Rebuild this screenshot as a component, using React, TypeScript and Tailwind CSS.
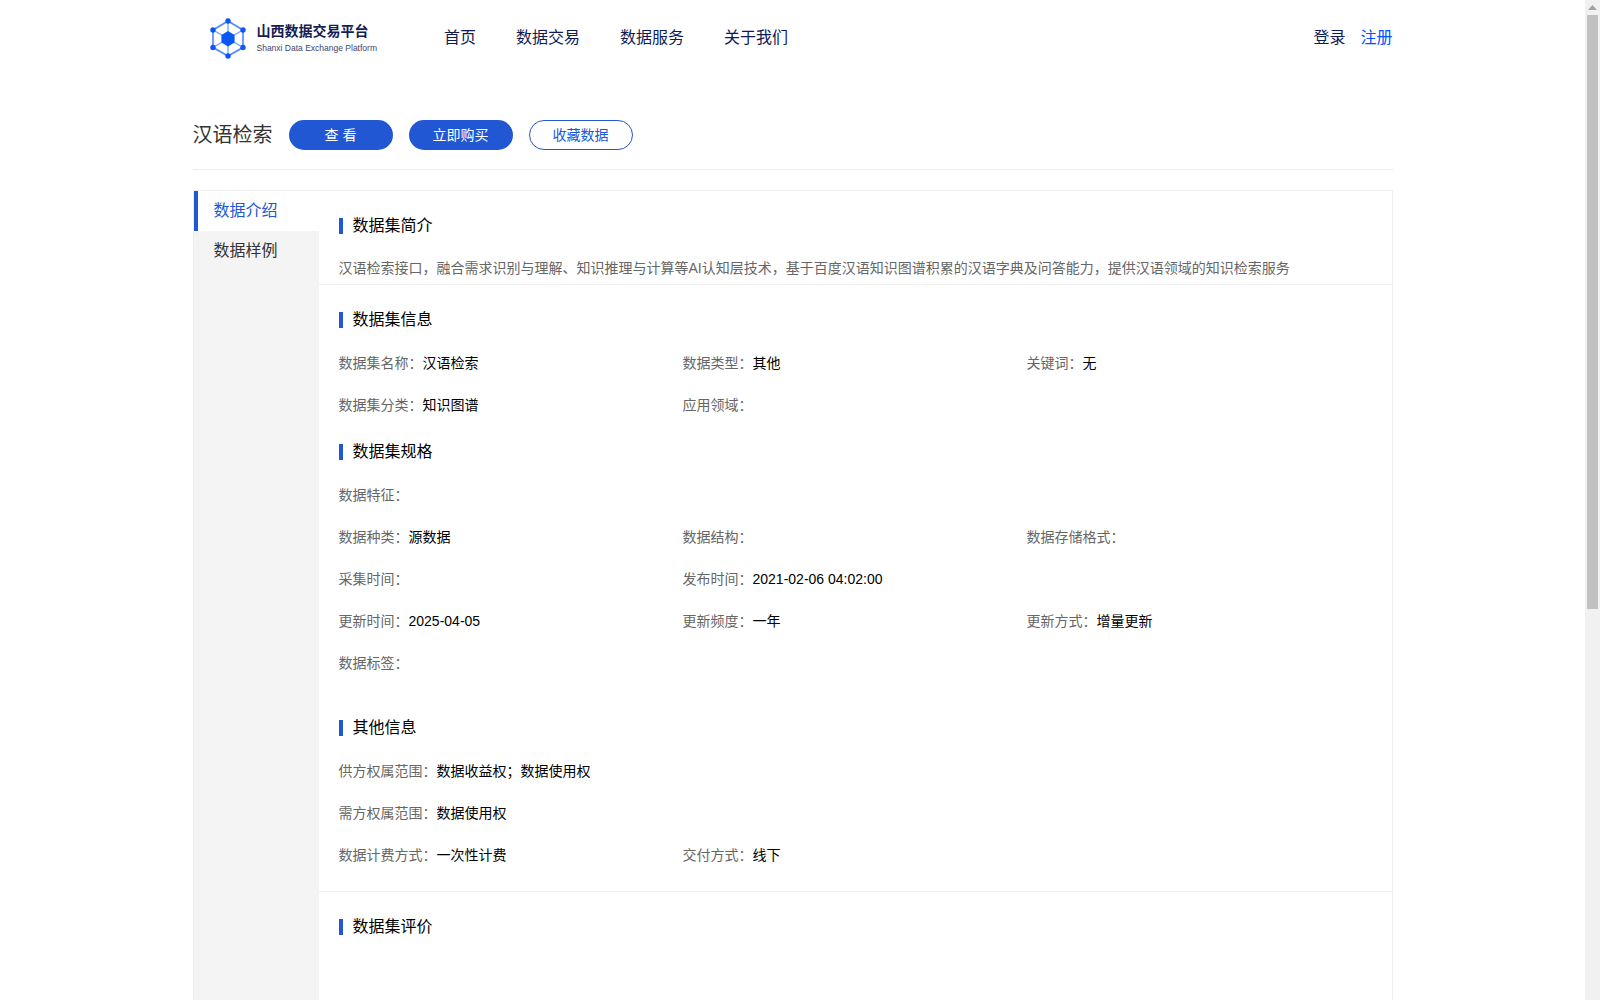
import React from "react";

type Cell = [string, string] | null;

function Heading({ children, className = "" }: { children: React.ReactNode; className?: string }) {
  return (
    <div className={"flex h-4 items-center " + className}>
      <span className="h-4 w-1 bg-[#2257d4]" />
      <h3 className="ml-2.5 text-base leading-4 text-black">{children}</h3>
    </div>
  );
}

function Rows({ cells, className = "" }: { cells: Cell[]; className?: string }) {
  return (
    <div className={"grid grid-cols-[344px_344px_1fr] auto-rows-[42px] " + className}>
      {cells.map((c, i) => (
        <div key={i} className="flex items-center text-sm text-[#666666]">
          {c && (
            <>
              <span>{c[0]}：</span>
              <span className="text-black">{c[1]}</span>
            </>
          )}
        </div>
      ))}
    </div>
  );
}

function Logo() {
  const outer: [number, number][] = [
    [18, 3],
    [33, 12],
    [33, 29.5],
    [18, 38],
    [3, 29.5],
    [3, 12],
  ];
  return (
    <div className="flex items-center">
      <svg width="36" height="41" viewBox="0 0 36 41" className="ml-[17px]">
        <polygon points={outer.map((p) => p.join(",")).join(" ")} fill="none" stroke="#4d86ff" strokeWidth="1.6" />
        {outer.map((p, i) => (
          <line key={i} x1="18" y1="20.7" x2={p[0]} y2={p[1]} stroke="#7aa5ff" strokeWidth="1.4" />
        ))}
        {outer.map((p, i) => (
          <circle key={i} cx={p[0]} cy={p[1]} r="2.7" fill="#0b57f5" />
        ))}
        <polygon points="18,13 24.6,16.9 24.6,24.5 18,28.4 11.4,24.5 11.4,16.9" fill="#0b57f5" />
      </svg>
      <div className="ml-[11px] flex flex-col">
        <span className="text-sm leading-[18px] font-bold whitespace-nowrap text-[#141d54]">山西数据交易平台</span>
        <span className="mt-[3px] text-[8.5px] leading-[11px] whitespace-nowrap text-[#3b4470]">
          Shanxi Data Exchange Platform
        </span>
      </div>
    </div>
  );
}

export default function App() {
  return (
    <div className="flex h-screen overflow-hidden bg-white font-['Liberation_Sans','Noto_Sans_CJK_SC',sans-serif]">
      <div className="min-w-0 flex-1">
        <div className="mx-auto w-[1200px]">
          <header className="flex h-[76px] items-center text-base text-[#101a56]">
            <Logo />
            <nav className="ml-[67px] flex gap-10">
              <a>首页</a>
              <a>数据交易</a>
              <a>数据服务</a>
              <a>关于我们</a>
            </nav>
            <div className="ml-auto flex gap-[15px]">
              <a>登录</a>
              <a className="text-[#0052ff]">注册</a>
            </div>
          </header>

          <div className="mt-11 flex items-center gap-4 border-b border-[#eeeeee] pb-[19px]">
            <h1 className="text-xl leading-[30px] text-[#333333]">汉语检索</h1>
            <button className="h-[30px] w-[104px] rounded-[15px] bg-[#2257d4] text-sm text-white">查 看</button>
            <button className="h-[30px] w-[104px] rounded-[15px] bg-[#2257d4] text-sm text-white">立即购买</button>
            <button className="h-[30px] w-[104px] rounded-[15px] border border-[#2257d4] bg-white text-sm text-[#2257d4]">
              收藏数据
            </button>
          </div>

          <div className="mt-5 flex border border-[#eeeeee]">
            <aside className="w-[125px] shrink-0 bg-[#f4f4f4] text-base">
              <div className="flex h-10 items-center border-l-4 border-[#2257d4] bg-white pl-[16px] text-[#2257d4]">
                数据介绍
              </div>
              <div className="flex h-10 items-center pl-5 text-[#333333]">数据样例</div>
            </aside>
            <main className="min-w-0 flex-1">
              <section className="border-b border-[#eeeeee] pt-[27px] pr-5 pb-1.5 pl-5">
                <Heading>数据集简介</Heading>
                <p className="mt-6 text-sm leading-5 whitespace-nowrap text-[#666666]">
                  汉语检索接口，融合需求识别与理解、知识推理与计算等AI认知层技术，基于百度汉语知识图谱积累的汉语字典及问答能力，提供汉语领域的知识检索服务
                </p>
              </section>
              <section className="border-b border-[#eeeeee] pt-[27px] pr-5 pb-[15px] pl-5">
                <Heading>数据集信息</Heading>
                <Rows
                  className="mt-3.5"
                  cells={[
                    ["数据集名称", "汉语检索"],
                    ["数据类型", "其他"],
                    ["关键词", "无"],
                    ["数据集分类", "知识图谱"],
                    ["应用领域", ""],
                    null,
                  ]}
                />
                <Heading className="mt-[18px]">数据集规格</Heading>
                <Rows
                  className="mt-3.5"
                  cells={[
                    ["数据特征", ""],
                    null,
                    null,
                    ["数据种类", "源数据"],
                    ["数据结构", ""],
                    ["数据存储格式", ""],
                    ["采集时间", ""],
                    ["发布时间", "2021-02-06 04:02:00"],
                    null,
                    ["更新时间", "2025-04-05"],
                    ["更新频度", "一年"],
                    ["更新方式", "增量更新"],
                    ["数据标签", ""],
                    null,
                    null,
                  ]}
                />
                <Heading className="mt-9">其他信息</Heading>
                <Rows
                  className="mt-3.5"
                  cells={[
                    ["供方权属范围", "数据收益权；数据使用权"],
                    null,
                    null,
                    ["需方权属范围", "数据使用权"],
                    null,
                    null,
                    ["数据计费方式", "一次性计费"],
                    ["交付方式", "线下"],
                    null,
                  ]}
                />
              </section>
              <section className="pt-[27px] pl-5">
                <Heading>数据集评价</Heading>
                <svg width="220" height="40" viewBox="0 0 220 40" className="mt-[46px] ml-[451px]">
                  <defs>
                    <linearGradient id="g1" x1="0" y1="1" x2="1" y2="0">
                      <stop offset="0" stopColor="#eef1fe" />
                      <stop offset="1" stopColor="#c9d5f8" />
                    </linearGradient>
                  </defs>
                  <polygon points="20,40 77,24 83,28 107,22 113,23 118,28 121,40" fill="url(#g1)" />
                  <polygon points="85,40 85,32 112,26 118,30 121,40" fill="#e6ebff" />
                  <polygon points="91,40 91,35 112,31 112,40" fill="#ffffff" />
                  <circle cx="186" cy="46" r="14" fill="#eef2ff" />
                  <circle cx="204" cy="48" r="14" fill="#eef2ff" />
                </svg>
              </section>
            </main>
          </div>
        </div>
      </div>

      <div className="flex h-full w-[15px] shrink-0 flex-col bg-[#f1f1f1]">
        <div className="flex h-[15px] items-center justify-center">
          <svg width="9" height="5" viewBox="0 0 9 5">
            <polygon points="4.5,0 9,5 0,5" fill="#a3a3a3" />
          </svg>
        </div>
        <div className="mx-0.5 h-[594px] bg-[#c1c1c1]" />
      </div>
    </div>
  );
}
